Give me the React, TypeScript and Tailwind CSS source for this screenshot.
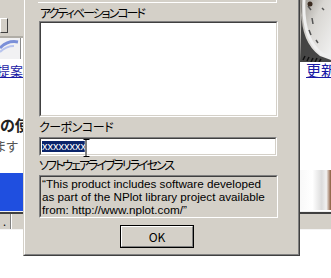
import React from "react";

const jp = "font-['MS_UI_Gothic','Noto_Sans_CJK_JP',sans-serif] [font-feature-settings:'palt']";

function Sunken({ className, inner, children }: { className?: string; inner?: string; children?: React.ReactNode }) {
  return (
    <div className={"border border-t-[#808080] border-l-[#808080] border-r-white border-b-white " + (className || "")}>
      <div className={"h-full border border-t-[#404040] border-l-[#404040] border-r-[#d4d0c8] border-b-[#d4d0c8] " + (inner || "")}>
        {children}
      </div>
    </div>
  );
}

function LeftColumn() {
  return (
    <div className="w-[23px] flex flex-col overflow-hidden">
      <div className="h-[36px] bg-[#d4d0c8] flex flex-col">
        <div className="mt-[18px] h-[15px] w-[8px] border border-t-white border-l-white border-r-[#404040] border-b-[#404040] bg-[#d4d0c8]" />
      </div>
      <div className="h-[2px] bg-[#b0ada6]" />
      <div className="h-[21px] bg-[#eeeeee] flex">
        <svg width="20" height="21" viewBox="0 0 20 21">
          <rect width="20" height="21" fill="#f1f1f3" />
          <path d="M0 10 Q8 2 18 4" stroke="#7a8fd8" strokeWidth="3" fill="none" />
          <path d="M0 14 Q6 8 14 8" stroke="#b8c4ee" strokeWidth="2" fill="none" />
        </svg>
        <div className="w-[1px] bg-[#8a8a8a]" />
        <div className="flex-1 bg-white" />
      </div>
      <div className="h-[3px] bg-white" />
      <div className={"h-[17px] flex justify-end whitespace-nowrap text-[13px] leading-[17px] text-[#1a1aa6] underline " + jp}>
        ご提案
      </div>
      <div className="h-[37px] bg-white" />
      <div className={"h-[18px] flex whitespace-nowrap text-[15px] leading-[18px] font-bold text-[#222] " + jp}>
        の使い
      </div>
      <div className="h-[5px]" />
      <div className={"h-[14px] flex justify-end pr-[5px] whitespace-nowrap text-[13px] leading-[14px] text-[#555] " + jp}>
        できます
      </div>
      <div className="h-[20px]" />
      <div className="h-[38px] bg-[#1f4fe0]" />
      <div className="flex-1 bg-[#e8e8e8]" />
    </div>
  );
}

function RightColumn() {
  return (
    <div className="w-[31px] flex flex-col overflow-hidden">
      <div className="h-[62px]">
        <svg width="31" height="62" viewBox="0 0 31 62">
          <defs>
            <linearGradient id="cg" x1="0" y1="0" x2="1" y2="1">
              <stop offset="0" stopColor="#9a9690" />
              <stop offset="0.4" stopColor="#d8d6d2" />
              <stop offset="1" stopColor="#f4f4f4" />
            </linearGradient>
          </defs>
          <rect width="31" height="62" fill="url(#cg)" />
          <path d="M2 0 Q-2 40 20 56 L31 60 L31 62 L0 62 Z" fill="#2a2a2a" opacity="0.85" />
          <path d="M4 0 Q2 38 22 54 L31 57" stroke="#efefef" strokeWidth="3" fill="none" />
          <path d="M8 6 l3 4 M12 18 l1 6 M9 30 l2 5 M16 40 l2 3 M22 8 l2 2" stroke="#555" strokeWidth="1.5" />
          <circle cx="10" cy="4" r="2.5" fill="#3a2a20" />
          <path d="M3 60 l2 -4 M7 61 l2 -4 M11 62 l2 -4 M15 62 l2 -4 M19 62 l2 -3" stroke="#111" strokeWidth="1.5" />
        </svg>
      </div>
      <div className={"h-[17px] pl-[6px] whitespace-nowrap text-[15px] leading-[16px] text-[#1a1aa6] underline " + jp}>
        更新情報
      </div>
      <div className="h-[91px] bg-white" />
      <div className="h-[40px] bg-[linear-gradient(90deg,#f8f8f8_0%,#ffffff_40%,#dcdcdc_70%,#f2f2f2_85%,#8a5a3a_100%)]" />
      <div className="flex-1 bg-white" />
    </div>
  );
}

function Dialog() {
  return (
    <div className="absolute left-[23px] top-0 w-[277px] h-[256px] border-l border-r border-b border-l-[#d4d0c8] border-r-[#404040] border-b-[#404040] bg-[#d4d0c8]">
      <div className="h-full border-l border-r border-b border-l-white border-r-[#808080] border-b-[#808080] pl-[14px] flex flex-col">
        <div className="h-[3px] w-[239px] -ml-[1px] border-b border-r border-b-white border-r-white" />
        <div className={"mt-[3px] h-[14px] leading-[14px] text-[12px] tracking-[-2px] text-black whitespace-nowrap pl-[1px] " + jp}>
          アクティベーションコード
        </div>
        <Sunken className="mt-[1px] h-[96px] w-[239px]" inner="bg-white" />
        <div className={"mt-[3px] h-[14px] leading-[14px] text-[12px] tracking-[-0.5px] text-black whitespace-nowrap " + jp}>
          クーポンコード
        </div>
        <div className="relative mt-[3px]">
          <Sunken className="h-[19px] w-[238px]" inner="bg-white flex items-center pl-[1px]">
            <span className="inline-block h-[11px] leading-[11px] bg-[#0a246a] text-white text-[11px] font-['Liberation_Sans',sans-serif]">
              xxxxxxxx
            </span>
          </Sunken>
          <svg className="absolute left-[44px] top-[2px]" width="7" height="18" viewBox="0 0 7 18">
            <path d="M0.5 0.5 H3 V17.5 H0.5 M3 0.5 H6.5 M3 17.5 H6.5" stroke="#fff" strokeWidth="2.5" fill="none" />
            <path d="M0.5 0.5 H3 V17.5 H0.5 M3 0.5 H6.5 M3 17.5 H6.5" stroke="#000" strokeWidth="1" fill="none" />
          </svg>
        </div>
        <div className={"mt-[2px] h-[14px] leading-[14px] text-[12px] tracking-[-2px] text-black whitespace-nowrap " + jp}>
          ソフトウェアライブラリライセンス
        </div>
        <Sunken className="mt-[3px] h-[43px] w-[239px]" inner="bg-[#d4d0c8] pl-[1px]">
          <p className="text-[11.7px] leading-[13px] text-black font-['Liberation_Sans',sans-serif] w-[232px]">
            “This product includes software developed as part of the NPlot library project available from: http://www.nplot.com/”
          </p>
        </Sunken>
        <div className="mt-[7px] ml-[81px] w-[74px] h-[23px] border border-black">
          <div className="h-full border border-t-white border-l-white border-r-[#808080] border-b-[#808080] flex items-center justify-center">
            <span className={"text-[12px] leading-[14px] text-black " + jp}>OK</span>
          </div>
        </div>
      </div>
    </div>
  );
}

export default function App() {
  return (
    <div className="relative w-[331px] h-[278px] overflow-hidden bg-white">
      <div className="flex flex-col h-full">
        <div className="flex h-[211px]">
          <LeftColumn />
          <div className="flex-1 bg-white" />
          <RightColumn />
        </div>
        <div className="h-[1px] bg-[#f0f0f0]" />
        <div className="h-[2px] bg-[#404040]" />
        <div className="h-[15px] bg-[#d4d0c8] flex">
          <div className={"w-[10px] text-[11px] leading-[15px] text-black pl-[3px] " + jp}>.</div>
          <div className="w-[1px] bg-[#808080]" />
          <div className="w-[1px] bg-white" />
          <div className="flex-1" />
        </div>
        <div className="h-[1px] bg-[#f4f4f4]" />
        <div className="flex-1 bg-white" />
      </div>
      <Dialog />
    </div>
  );
}
